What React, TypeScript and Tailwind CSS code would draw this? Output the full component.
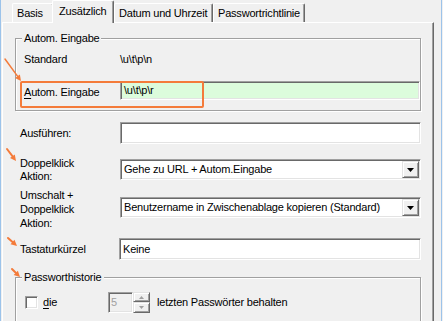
import type { ReactNode } from 'react';

const font = "font-['Liberation_Sans',Arial,sans-serif] text-[11px] tracking-[-0.2px] text-black";
const sunken = 'border border-t-[#a0a0a0] border-l-[#a0a0a0] border-r-white border-b-white shadow-[inset_1px_1px_0_#696969,inset_-1px_-1px_0_#e3e3e3]';
const raised = 'border border-t-[#e3e3e3] border-l-[#e3e3e3] border-r-[#696969] border-b-[#696969] shadow-[inset_1px_1px_0_#fff,inset_-1px_-1px_0_#a0a0a0] bg-[#f0f0f0]';
const etched = 'border border-[#a0a0a0] shadow-[inset_1px_1px_0_#fff,1px_1px_0_#fff]';
const ORANGE = '#f47b3a';

function Tab({ label, cls, active }: { label: string; cls: string; active?: boolean }) {
  if (active)
    return (
      <div className={`relative z-10 -ml-[2px] -mb-[1px] h-[23px] pt-[4px] bg-[#f0f0f0] border-t border-l border-r border-t-white border-l-white border-r-[#696969] shadow-[inset_-1px_0_0_#a0a0a0] rounded-t-[2px] leading-[13px] ${cls}`}>
        {label}
      </div>
    );
  return (
    <div className={`h-[19px] pt-[3px] bg-[#f0f0f0] border-t border-l border-r border-t-white border-l-white border-r-[#696969] shadow-[inset_-1px_0_0_#a0a0a0] rounded-t-[2px] leading-[13px] ${cls}`}>
      {label}
    </div>
  );
}

function Legend({ children }: { children: ReactNode }) {
  return <div className="-mt-[7px] ml-[6px] w-fit px-[2px] bg-[#f0f0f0] leading-[13px]">{children}</div>;
}

function Combo({ value, top }: { value: string; top: string }) {
  return (
    <div className={`${top} w-[301px] h-[21px] p-[1px] flex items-stretch bg-white ${sunken}`}>
      <div className="flex-1 pl-[2px] flex items-center leading-[13px] whitespace-nowrap overflow-hidden">{value}</div>
      <div className={`w-[17px] flex items-center justify-center ${raised}`}>
        <svg width="7" height="4" viewBox="0 0 7 4"><polygon points="0,0 7,0 3.5,4" fill="#000" /></svg>
      </div>
    </div>
  );
}

function Arrow({ x1, y1, x2, y2, w = 2, head = 6 }: { x1: number; y1: number; x2: number; y2: number; w?: number; head?: number }) {
  const a = Math.atan2(y2 - y1, x2 - x1);
  const bx = x2 - head * Math.cos(a);
  const by = y2 - head * Math.sin(a);
  const px = -Math.sin(a) * head * 0.5;
  const py = Math.cos(a) * head * 0.5;
  return (
    <g>
      <line x1={x1} y1={y1} x2={bx} y2={by} stroke={ORANGE} strokeWidth={w} strokeLinecap="round" />
      <polygon points={`${x2},${y2} ${bx + px},${by + py} ${bx - px},${by - py}`} fill={ORANGE} />
    </g>
  );
}

export default function App() {
  return (
    <div className={`relative w-[443px] h-[321px] overflow-hidden bg-[#f0f0f0] flex ${font}`}>
      <div className="w-[1px] bg-[#9cc3ea]" />
      <div className="w-[1px]" />
      <div className="w-[432px] flex flex-col">
        <div className="relative z-10 h-[24px] flex items-end pl-[10px]">
          <Tab label="Basis" cls="w-[42px] pl-[4px]" />
          <Tab label="Zusätzlich" cls="w-[62px] pl-[6px]" active />
          <Tab label="Datum und Uhrzeit" cls="w-[99px] pl-[4px]" />
          <Tab label="Passwortrichtlinie" cls="w-[92px] pl-[4px]" />
        </div>
        <div className="flex-1 pl-[12px] border-t border-l border-r border-t-white border-l-white border-r-[#696969] shadow-[inset_-1px_0_0_#a0a0a0]">
          {/* Autom. Eingabe */}
          <div className={`mt-[15px] w-[406px] pb-[10px] ${etched}`}>
            <Legend>Autom. Eingabe</Legend>
            <div className="mt-[5px] h-[18px] pl-[8px] flex items-center leading-[13px]">
              <div className="w-[96px]">Standard</div>
              <div>\u\t\p\n</div>
            </div>
            <div className="mt-[13px] pl-[8px] flex items-start leading-[13px]">
              <div className="w-[96px] mt-[5px]"><span className="underline underline-offset-2">A</span>utom. Eingabe</div>
              <div className={`w-[300px] h-[19px] pl-[3px] flex items-center bg-[#dcfcdc] ${sunken}`}>\u\t\p\r</div>
            </div>
          </div>

          <div className="mt-[11px] pl-[5px] h-[22px] flex items-center leading-[13px]">
            <div className="w-[100px]">Ausführen:</div>
            <div className={`w-[301px] h-[22px] bg-white ${sunken}`} />
          </div>

          <div className="mt-[13px] pl-[5px] flex items-start">
            <div className="w-[100px] leading-[13px]">Doppelklick<br />Aktion:</div>
            <Combo value="Gehe zu URL + Autom.Eingabe" top="mt-[2px]" />
          </div>

          <div className="mt-[5px] pl-[5px] flex items-start">
            <div className="w-[100px] leading-[14px]">Umschalt +<br />Doppelklick<br />Aktion:</div>
            <Combo value="Benutzername in Zwischenablage kopieren (Standard)" top="mt-[9px]" />
          </div>

          <div className="mt-[8px] pl-[5px] h-[22px] flex items-center leading-[13px]">
            <div className="w-[99px]">Tastaturkürzel</div>
            <div className={`w-[302px] h-[22px] pl-[3px] flex items-center bg-white ${sunken}`}>Keine</div>
          </div>

          {/* Passworthistorie */}
          <div className={`mt-[17px] w-[406px] pb-[20px] ${etched}`}>
            <Legend>Passworthistorie</Legend>
            <div className="mt-[8px] pl-[9px] h-[21px] flex items-center leading-[13px]">
              <div className="w-[83px] flex items-center">
                <div className={`w-[13px] h-[13px] bg-white ${sunken}`} />
                <div className="ml-[5px]"><span className="underline underline-offset-2">d</span>ie</div>
              </div>
              <div className={`w-[25px] h-[21px] pl-[2px] flex items-center text-[#a0a0a0] bg-[#f0f0f0] ${sunken}`}>5</div>
              <div className="w-[17px] h-[21px] flex flex-col">
                <div className={`h-[10px] flex items-center justify-center ${raised}`}>
                  <svg width="5" height="3" viewBox="0 0 5 3"><polygon points="2.5,0 5,3 0,3" fill="#a0a0a0" /></svg>
                </div>
                <div className={`h-[11px] flex items-center justify-center ${raised}`}>
                  <svg width="5" height="3" viewBox="0 0 5 3"><polygon points="0,0 5,0 2.5,3" fill="#a0a0a0" /></svg>
                </div>
              </div>
              <div className="ml-[7px]">letzten Passwörter behalten</div>
            </div>
          </div>
        </div>
      </div>
      <div className="w-[7px]" />
      <div className="w-[1px] bg-[#9cc3ea]" />

      <svg className="absolute inset-0 pointer-events-none" width="443" height="321" viewBox="0 0 443 321">
        <rect x="21" y="82" width="182" height="25" fill="none" stroke={ORANGE} strokeWidth="2" rx="1" />
        <Arrow x1={5} y1={59} x2={21} y2={81} w={1.5} head={6} />
        <Arrow x1={7} y1={149} x2={16} y2={161} />
        <Arrow x1={8} y1={238} x2={17} y2={246} />
        <Arrow x1={12} y1={269} x2={20} y2={277} />
      </svg>
    </div>
  );
}
